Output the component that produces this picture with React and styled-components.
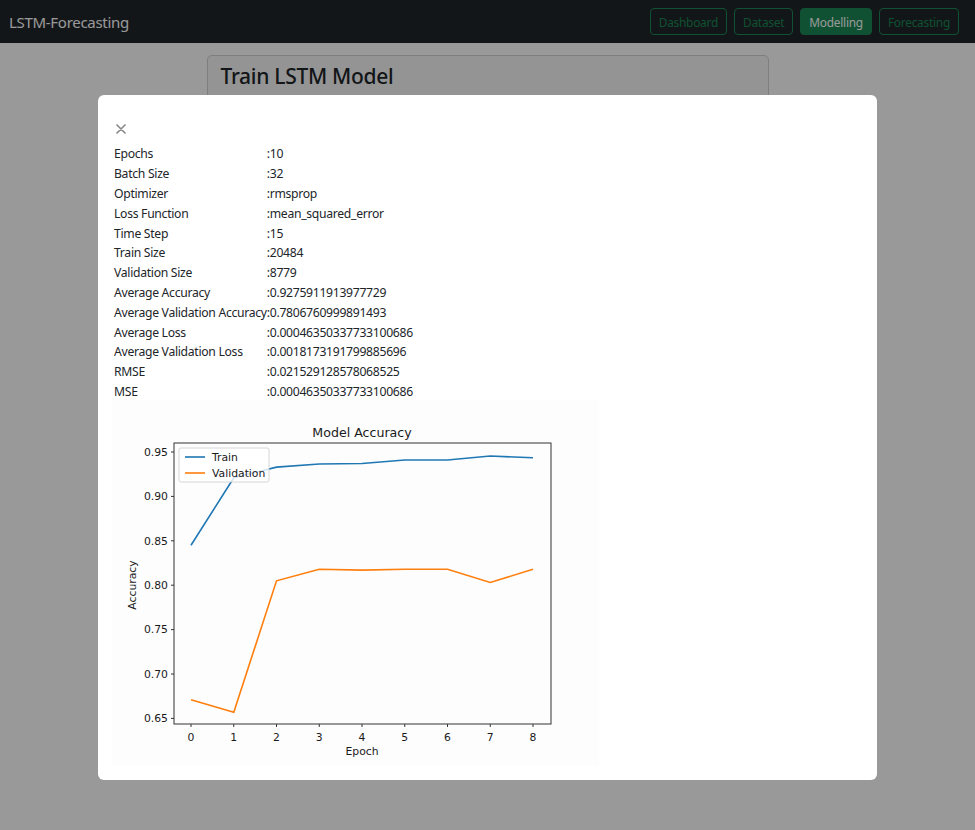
import React from "react";
import styled, { createGlobalStyle } from "styled-components";

const GlobalStyle = createGlobalStyle`
  html, body {
    margin: 0;
    padding: 0;
    background: #ffffff;
  }
  body {
    font-family: "Noto Sans", "Open Sans", sans-serif;
    color: #212529;
    height: 830px;
    overflow: hidden;
  }
`;

const Navbar = styled.nav`
  height: 43px;
  background: #212529;
  display: flex;
  align-items: center;
  justify-content: space-between;
  padding: 0 16px 0 9px;
`;

const Brand = styled.div`
  color: #ffffff;
  font-size: 15px;
  letter-spacing: -0.3px;
`;

const NavButtons = styled.div`
  display: flex;
  gap: 7px;
`;

const NavButton = styled.button`
  height: 27px;
  padding: 0 8px;
  border-radius: 4px;
  font-family: inherit;
  font-size: 11.9px;
  letter-spacing: -0.25px;
  border: 1px solid #198754;
  background: ${(p) => (p.$active ? "#198754" : "transparent")};
  color: ${(p) => (p.$active ? "#ffffff" : "#198754")};
`;

const Main = styled.main`
  display: flex;
  justify-content: center;
  padding-top: 12px;
`;

const Card = styled.section`
  width: 560px;
  border: 1px solid rgba(0, 0, 0, 0.175);
  border-radius: 5px;
  overflow: hidden;
`;

const CardHeader = styled.div`
  padding: 6px 12px 8px 13px;
  background: rgba(0, 0, 0, 0.03);
  border-bottom: 1px solid rgba(0, 0, 0, 0.175);
  height: 200px;
`;

const CardTitle = styled.h3`
  margin: 0;
  font-size: 21px;
  font-weight: 500;
  letter-spacing: -0.3px;
`;

const Backdrop = styled.div`
  position: fixed;
  inset: 0;
  background: rgba(0, 0, 0, 0.4);
`;

const Modal = styled.div`
  position: fixed;
  top: 95px;
  left: 98px;
  width: 779px;
  height: 685px;
  box-sizing: border-box;
  background: #ffffff;
  border-radius: 6px;
  padding: 16px 16px;
`;

const CloseRow = styled.div`
  height: 33px;
  display: flex;
  align-items: center;
  padding-top: 2px;
  box-sizing: border-box;
`;

const CloseButton = styled.button`
  border: 0;
  background: transparent;
  padding: 0 0 0 2px;
  display: flex;
  cursor: pointer;
`;

const StatsTable = styled.table`
  border-collapse: collapse;
  font-size: 12.2px;
  letter-spacing: -0.3px;
  color: #212529;
`;

const Label = styled.td`
  padding: 0;
  height: 19.8px;
  white-space: nowrap;
`;

const Value = styled.td`
  padding: 0;
  height: 19.8px;
  white-space: nowrap;
`;

const ChartBox = styled.div`
  margin-left: -2px;
  margin-top: -1px;
  width: 487px;
  height: 365px;
  background: #fdfdfd;
`;

const stats = [
  ["Epochs", "10"],
  ["Batch Size", "32"],
  ["Optimizer", "rmsprop"],
  ["Loss Function", "mean_squared_error"],
  ["Time Step", "15"],
  ["Train Size", "20484"],
  ["Validation Size", "8779"],
  ["Average Accuracy", "0.9275911913977729"],
  ["Average Validation Accuracy", "0.7806760999891493"],
  ["Average Loss", "0.00046350337733100686"],
  ["Average Validation Loss", "0.0018173191799885696"],
  ["RMSE", "0.021529128578068525"],
  ["MSE", "0.00046350337733100686"],
];

const train = [0.845, 0.921, 0.933, 0.9365, 0.937, 0.941, 0.941, 0.9455, 0.9435];
const validation = [0.671, 0.657, 0.805, 0.818, 0.817, 0.818, 0.818, 0.803, 0.818];

const px = (i) => 79 + i * 42.75;
const py = (v) => 52 + (0.95 - v) * 888;
const pts = (arr) => arr.map((v, i) => `${px(i).toFixed(1)},${py(v).toFixed(1)}`).join(" ");

const yTicks = [0.95, 0.9, 0.85, 0.8, 0.75, 0.7, 0.65];
const chartFont = { fontFamily: "'DejaVu Sans', sans-serif", fill: "#1a1a1a" };

const AccuracyChart = () => (
  <svg width="487" height="365" viewBox="0 0 487 365">
    <text x="250" y="37" textAnchor="middle" fontSize="12.6" style={chartFont}>
      Model Accuracy
    </text>
    <polyline points={pts(train)} fill="none" stroke="#1f77b4" strokeWidth="1.6" />
    <polyline points={pts(validation)} fill="none" stroke="#ff7f0e" strokeWidth="1.6" />
    <rect x="62" y="43" width="377" height="281" fill="none" stroke="#333" strokeWidth="1" />
    {yTicks.map((t) => (
      <g key={t}>
        <line x1="59" x2="62" y1={py(t)} y2={py(t)} stroke="#333" strokeWidth="1" />
        <text x="56" y={py(t) + 3.8} textAnchor="end" fontSize="10.8" style={chartFont}>
          {t.toFixed(2)}
        </text>
      </g>
    ))}
    {train.map((_, i) => (
      <g key={i}>
        <line x1={px(i)} x2={px(i)} y1="324" y2="327" stroke="#333" strokeWidth="1" />
        <text x={px(i)} y="341" textAnchor="middle" fontSize="10.8" style={chartFont}>
          {i}
        </text>
      </g>
    ))}
    <text x="250" y="355" textAnchor="middle" fontSize="10.8" style={chartFont}>
      Epoch
    </text>
    <text
      x="0"
      y="0"
      transform="translate(24 185) rotate(-90)"
      textAnchor="middle"
      fontSize="10.8"
      style={chartFont}
    >
      Accuracy
    </text>
    <rect x="67" y="48" width="90" height="34" rx="2" fill="#fff" fillOpacity="0.8" stroke="#ccc" strokeWidth="0.8" />
    <line x1="73" x2="93" y1="57" y2="57" stroke="#1f77b4" strokeWidth="1.6" />
    <text x="100" y="61" fontSize="10.8" style={chartFont}>
      Train
    </text>
    <line x1="73" x2="93" y1="73" y2="73" stroke="#ff7f0e" strokeWidth="1.6" />
    <text x="100" y="77" fontSize="10.8" style={chartFont}>
      Validation
    </text>
  </svg>
);

const App = () => {
  return (
    <>
      <GlobalStyle />
      <Navbar>
        <Brand>LSTM-Forecasting</Brand>
        <NavButtons>
          <NavButton>Dashboard</NavButton>
          <NavButton>Dataset</NavButton>
          <NavButton $active>Modelling</NavButton>
          <NavButton>Forecasting</NavButton>
        </NavButtons>
      </Navbar>
      <Main>
        <Card>
          <CardHeader>
            <CardTitle>Train LSTM Model</CardTitle>
          </CardHeader>
        </Card>
      </Main>
      <Backdrop />
      <Modal>
        <CloseRow>
          <CloseButton aria-label="Close">
            <svg width="10" height="10" viewBox="0 0 10 10">
              <path d="M1 1L9 9M9 1L1 9" stroke="#8a8a8a" strokeWidth="1.7" strokeLinecap="round" />
            </svg>
          </CloseButton>
        </CloseRow>
        <StatsTable>
          <tbody>
            {stats.map(([k, v]) => (
              <tr key={k}>
                <Label>{k}</Label>
                <Value>:{v}</Value>
              </tr>
            ))}
          </tbody>
        </StatsTable>
        <ChartBox>
          <AccuracyChart />
        </ChartBox>
      </Modal>
    </>
  );
};

export default App;
